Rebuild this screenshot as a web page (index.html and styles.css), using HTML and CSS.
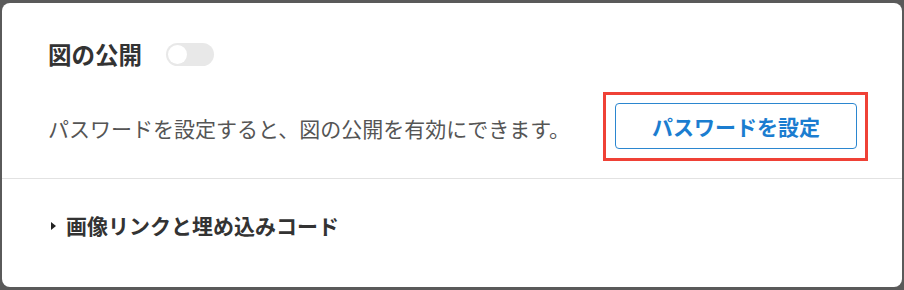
FILE: index.html
```html
<!DOCTYPE html>
<html lang="ja">
<head>
<meta charset="utf-8">
<link rel="stylesheet" href="styles.css">
</head>
<body>
<div class="card">
  <div class="top">
    <div class="title-row">
      <h2 class="title">図の公開</h2>
      <span class="toggle"><span class="knob"></span></span>
    </div>
    <div class="desc-row">
      <p class="desc">パスワードを設定すると、図の公開を有効にできます。</p>
      <div class="highlight">
        <button class="btn">パスワードを設定</button>
      </div>
    </div>
  </div>
  <div class="bottom">
    <div class="summary">
      <span class="caret"></span>
      <span class="summary-text">画像リンクと埋め込みコード</span>
    </div>
  </div>
</div>
</body>
</html>
```

FILE: styles.css
```css
html, body {
  margin: 0;
  padding: 0;
}
body {
  background: #5a5a5a;
  width: 904px;
  height: 290px;
  overflow: hidden;
  font-family: "Noto Sans CJK JP", "Noto Sans", sans-serif;
}
.card {
  margin: 3px 2px 0 2px;
  height: 284px;
  background: #fff;
  border-radius: 8px;
  display: flex;
  flex-direction: column;
}
.top {
  padding: 38px 34px 0 46px;
  border-bottom: 1px solid #e2e2e2;
  box-sizing: border-box;
  height: 176px;
}
.title-row {
  display: flex;
  align-items: center;
  gap: 24px;
  height: 26px;
}
.title {
  margin: 0;
  font-size: 23.5px;
  font-weight: 700;
  color: #333;
  line-height: 26px;
}
.toggle {
  width: 48px;
  height: 23px;
  border-radius: 12px;
  background: #e8e8e8;
  display: flex;
  align-items: center;
  padding: 0 2px;
  box-sizing: border-box;
}
.knob {
  width: 19px;
  height: 19px;
  border-radius: 50%;
  background: #fff;
}
.desc-row {
  display: flex;
  align-items: center;
  justify-content: space-between;
  margin-top: 25px;
}
.desc {
  margin: 0;
  font-size: 21px;
  color: #555;
  line-height: 28px;
  margin-top: 3px;
}
.highlight {
  border: 3px solid #ef4136;
  padding: 8px 8px 9px 9px;
}
.btn {
  display: block;
  width: 242px;
  height: 46px;
  border: 1px solid #2b86cf;
  border-radius: 4px;
  background: #fff;
  color: #1b7dd0;
  font-family: "Noto Sans CJK JP", "Noto Sans", sans-serif;
  font-size: 21px;
  font-weight: 700;
  padding: 0;
}
.bottom {
  padding: 33px 0 0 49px;
}
.summary {
  display: flex;
  align-items: center;
  gap: 10px;
  height: 26px;
}
.caret {
  width: 0;
  height: 0;
  border-top: 4.5px solid transparent;
  border-bottom: 4.5px solid transparent;
  border-left: 5px solid #222;
  margin-top: 1px;
}
.summary-text {
  font-size: 21px;
  font-weight: 700;
  color: #333;
  line-height: 26px;
}
```
